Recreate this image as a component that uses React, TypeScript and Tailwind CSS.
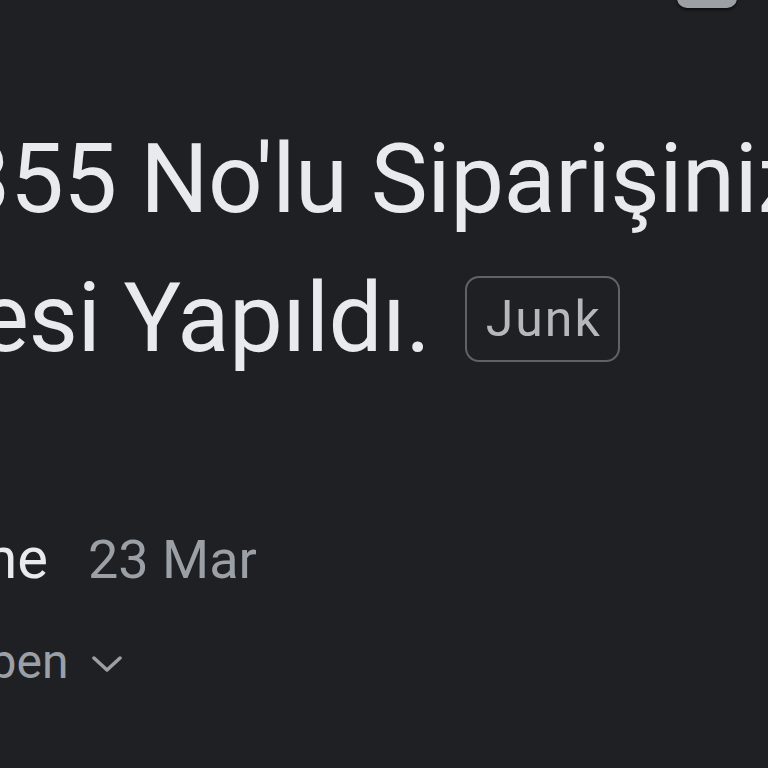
import React from "react";

export default function App() {
  const font = { fontFamily: "Roboto, 'Noto Sans', sans-serif" };
  return (
    <div
      className="w-[768px] h-[768px] overflow-hidden bg-[#1f2024] text-[#e8eaed]"
      style={font}
    >
      <div className="flex justify-end pr-[31px]">
        <div className="w-[60px] h-[24px] mt-[-16px] rounded-[10px] bg-[#9c9fa4] shadow-[0_2px_3px_rgba(0,0,0,0.6)]" />
      </div>

      <div className="mt-[102px] whitespace-nowrap">
        <div className="ml-[-97px] text-[96px] leading-[139px] tracking-[-0.5px]">
          3355 No'lu Siparişinizin
        </div>
        <div className="ml-[-153px] flex items-center text-[96px] leading-[139px] tracking-[-0.5px]">
          <span>İadesi Yapıldı.</span>
          <span className="ml-[35px] inline-flex items-center justify-center w-[155px] h-[86px] pl-[2px] rounded-[14px] border-2 border-[#5f6368] text-[50px] leading-none text-[#b4b7bb] tracking-[2px]">
            Junk
          </span>
        </div>
      </div>

      <div className="mt-[127px] flex items-baseline whitespace-nowrap ml-[-115px]">
        <span className="text-[58px] text-[#e8eaed]">Online</span>
        <span className="ml-[40px] text-[54px] text-[#9aa0a6]">23 Mar</span>
      </div>
      <div className="mt-[24px] flex items-center whitespace-nowrap ml-[-98px]">
        <span className="text-[48px] text-[#9aa0a6]">to Open</span>
        <svg
          className="ml-[24px] mt-[4px]"
          width="30"
          height="20"
          viewBox="0 0 30 20"
          fill="none"
          stroke="#9aa0a6"
          strokeWidth="3.5"
          strokeLinecap="round"
          strokeLinejoin="round"
        >
          <path d="M2 4 L15 16 L28 4" />
        </svg>
      </div>
    </div>
  );
}
